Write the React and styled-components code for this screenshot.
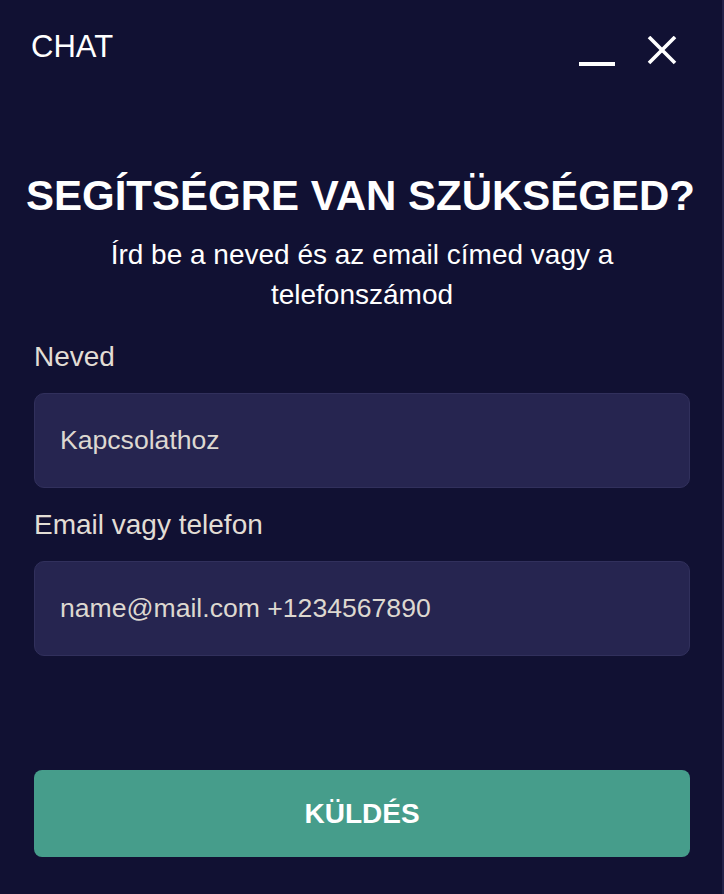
import React from "react";
import styled, { createGlobalStyle } from "styled-components";

const GlobalStyle = createGlobalStyle`
  html, body {
    margin: 0;
    padding: 0;
    background: #111133;
  }
  * {
    box-sizing: border-box;
  }
`;

const Page = styled.div`
  min-height: 100vh;
  background: #111133;
  border-right: 2px solid #232248;
  padding: 0 32px 0 31px;
  font-family: "Liberation Sans", Arial, sans-serif;
  display: flex;
  flex-direction: column;
`;

const Header = styled.header`
  display: flex;
  justify-content: space-between;
  align-items: flex-start;
  padding-top: 29px;
  height: 66px;
  padding-right: 13px;
`;

const HeaderTitle = styled.h1`
  margin: 0;
  font-size: 31px;
  line-height: 36px;
  font-weight: 400;
  color: #ffffff;
`;

const Controls = styled.div`
  display: flex;
  align-items: flex-start;
  gap: 32px;
  padding-top: 7px;
`;

const IconButton = styled.button`
  background: none;
  border: 0;
  padding: 0;
  margin: 0;
  cursor: pointer;
  display: block;
  line-height: 0;
`;

const Body = styled.div`
  padding-left: 3px;
  display: flex;
  flex-direction: column;
`;

const Title = styled.h2`
  margin: 105px -31px 0 -34px;
  font-size: 42px;
  line-height: 50px;
  font-weight: 700;
  color: #ffffff;
  text-align: center;
`;

const Subtitle = styled.p`
  margin: 14px 0 0;
  font-size: 28px;
  line-height: 40px;
  color: #ffffff;
  text-align: center;
  padding: 0 40px;
`;

const Form = styled.form`
  display: flex;
  flex-direction: column;
  gap: 21px;
  margin-top: 26px;
`;

const Field = styled.label`
  display: flex;
  flex-direction: column;
  gap: 20px;
`;

const LabelText = styled.span`
  font-size: 28px;
  line-height: 32px;
  color: #e2ddd5;
`;

const Input = styled.input`
  height: 95px;
  width: 100%;
  background: #262550;
  border: 1px solid #31305c;
  border-radius: 10px;
  padding: 0 25px;
  font-family: "Liberation Sans", Arial, sans-serif;
  font-size: 26.6px;
  color: #ddd8d0;
  outline: none;

  &::placeholder {
    color: #ddd8d0;
    opacity: 1;
  }
`;

const SubmitButton = styled.button`
  margin-top: 93px;
  height: 87px;
  width: 100%;
  border: 0;
  border-radius: 8px;
  background: #469d8b;
  color: #ffffff;
  font-family: "Liberation Sans", Arial, sans-serif;
  font-size: 28px;
  font-weight: 700;
  cursor: pointer;
`;

const MinimizeIcon = () => (
  <svg width="36" height="30" viewBox="0 0 36 30">
    <rect x="0" y="26" width="36" height="4" fill="#ffffff" />
  </svg>
);

const CloseIcon = () => (
  <svg width="30" height="30" viewBox="0 0 30 30">
    <path
      d="M2 1 L28 27 M28 1 L2 27"
      stroke="#ffffff"
      strokeWidth="3.6"
      fill="none"
    />
  </svg>
);

export default function App() {
  return (
    <>
      <GlobalStyle />
      <Page>
        <Header>
          <HeaderTitle>CHAT</HeaderTitle>
          <Controls>
            <IconButton aria-label="Minimize">
              <MinimizeIcon />
            </IconButton>
            <IconButton aria-label="Close">
              <CloseIcon />
            </IconButton>
          </Controls>
        </Header>
        <Body>
          <Title>SEGÍTSÉGRE VAN SZÜKSÉGED?</Title>
          <Subtitle>
            Írd be a neved és az email címed vagy a telefonszámod
          </Subtitle>
          <Form onSubmit={(e) => e.preventDefault()}>
            <Field>
              <LabelText>Neved</LabelText>
              <Input type="text" placeholder="Kapcsolathoz" />
            </Field>
            <Field>
              <LabelText>Email vagy telefon</LabelText>
              <Input type="text" placeholder="name@mail.com +1234567890" />
            </Field>
            <SubmitButton type="submit">KÜLDÉS</SubmitButton>
          </Form>
        </Body>
      </Page>
    </>
  );
}
